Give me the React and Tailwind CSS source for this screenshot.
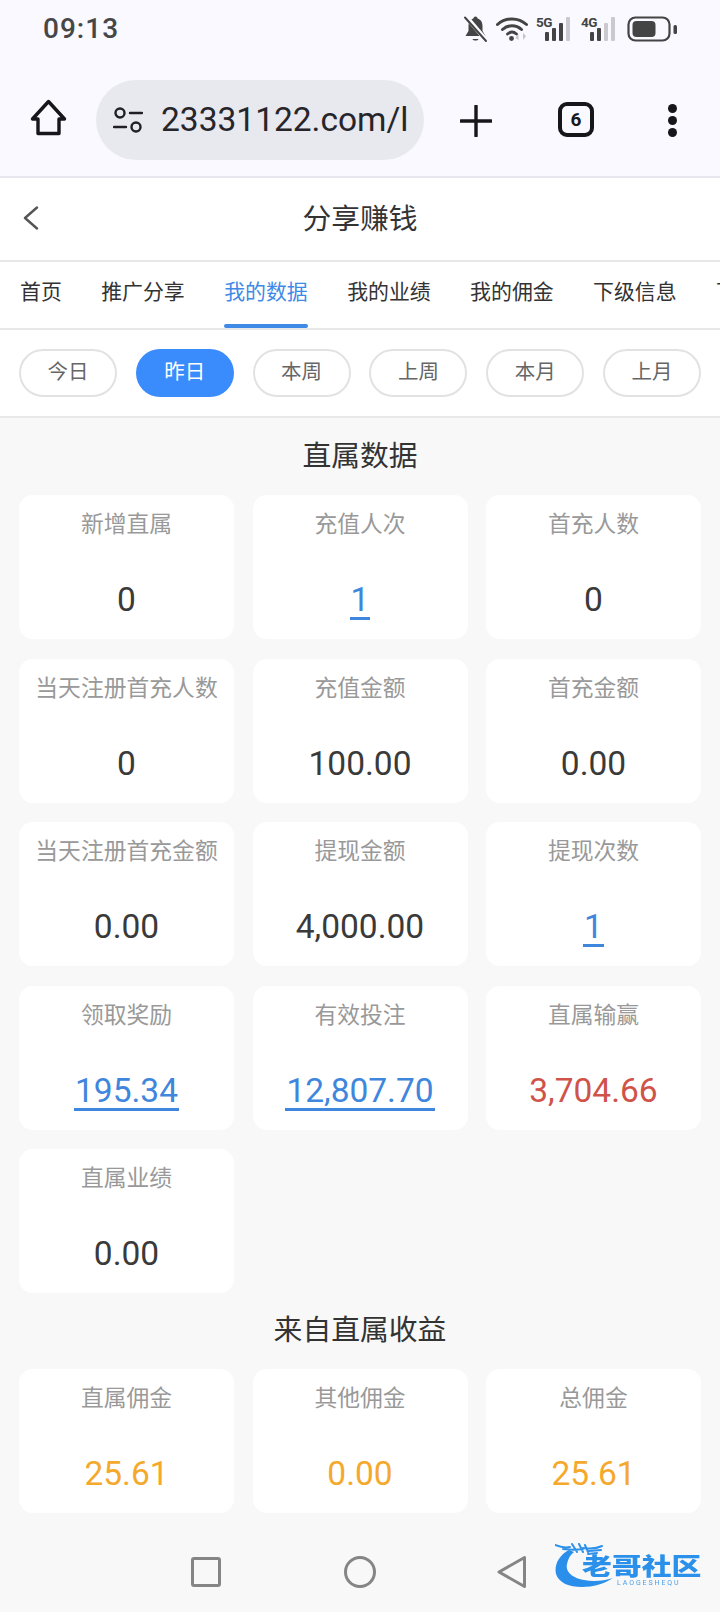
const tabs = ['首页', '推广分享', '我的数据', '我的业绩', '我的佣金', '下级信息', '下级报表']
const ranges = ['今日', '昨日', '本周', '上周', '本月', '上月']

const directStats = [
  { label: '新增直属', value: '0' },
  { label: '充值人次', value: '1', tone: 'link' },
  { label: '首充人数', value: '0' },
  { label: '当天注册首充人数', value: '0' },
  { label: '充值金额', value: '100.00' },
  { label: '首充金额', value: '0.00' },
  { label: '当天注册首充金额', value: '0.00' },
  { label: '提现金额', value: '4,000.00' },
  { label: '提现次数', value: '1', tone: 'link' },
  { label: '领取奖励', value: '195.34', tone: 'link' },
  { label: '有效投注', value: '12,807.70', tone: 'link' },
  { label: '直属输赢', value: '3,704.66', tone: 'red' },
  { label: '直属业绩', value: '0.00' },
]

const incomeStats = [
  { label: '直属佣金', value: '25.61', tone: 'orange' },
  { label: '其他佣金', value: '0.00', tone: 'orange' },
  { label: '总佣金', value: '25.61', tone: 'orange' },
]

function StatCard({ label, value, tone }) {
  let valueClass = 'text-[#3a3a3a] border-transparent'
  if (tone === 'link') valueClass = 'text-[#3f86dd] border-[#3f86dd]'
  if (tone === 'red') valueClass = 'text-[#cf5349] border-transparent'
  if (tone === 'orange') valueClass = 'text-[#f5a92c] border-transparent'
  return (
    <div className="h-[144px] bg-white rounded-[14px] flex flex-col items-center justify-between pt-[15px] pb-[19px]">
      <div className="text-[22.8px] leading-[30px] text-[#999999] whitespace-nowrap">{label}</div>
      <div className={`text-[33.5px] leading-[34px] border-b-[3px] px-[1px] ${valueClass}`}>{value}</div>
    </div>
  )
}

function SignalIcon({ tag, fullBars }) {
  const bars = [
    { x: 9, h: 9 },
    { x: 16, h: 13 },
    { x: 23, h: 18 },
    { x: 30, h: 24 },
  ]
  return (
    <div className="relative w-[37px] h-[26px]">
      <svg width="37" height="26" viewBox="0 0 37 26">
        {bars.map((b, i) => (
          <rect key={b.x} x={b.x} y={25 - b.h} width="4" height={b.h} rx="1" fill={i < fullBars ? '#444' : '#c9c9cf'} />
        ))}
      </svg>
      <span className="absolute left-0 top-0 text-[13.5px] leading-[12px] font-bold tracking-[-0.5px] text-[#444444]">{tag}</span>
    </div>
  )
}

function StatusBar() {
  return (
    <div className="h-[57px] flex items-center justify-between pl-[43px] pr-[41px]">
      <span className="text-[28px] font-medium tracking-[1px] text-[#474747]">09:13</span>
      <div className="flex items-center">
        {/* muted bell */}
        <svg width="25" height="28" viewBox="0 0 25 28" className="mr-[8px]">
          <path d="M12.5 1.5c-1.4 0-2 1-2.100 2C6.800 4.600 5.500 7.500 5.500 11v5l-3 5h20l-3-5v-5c0-3.500-1.300-6.400-4.900-7.500-.1-1-.7-2-2.100-2z" fill="#444" />
          <path d="M9.500 24h6c-.5 2-5.500 2-6 0z" fill="#444" />
          <path d="M3 1.500 23 25" stroke="#f9f9ff" strokeWidth="4.500" />
          <path d="M2 2.500 23 26" stroke="#444" strokeWidth="2" strokeLinecap="round" />
        </svg>
        {/* wifi */}
        <svg width="33" height="25" viewBox="0 0 33 25" className="mr-[7px]">
          <path d="M1.500 8.500C9.500 1 22.500 1 30.500 8.500" fill="none" stroke="#444" strokeWidth="3" strokeLinecap="round" />
          <path d="M6.500 13.500c5.500-5 13.500-5 19 0" fill="none" stroke="#444" strokeWidth="3" strokeLinecap="round" />
          <path d="M11.500 18c2.800-2.400 6.200-2.400 9 0" fill="none" stroke="#444" strokeWidth="2.800" strokeLinecap="round" />
          <circle cx="15.500" cy="22.500" r="2.400" fill="#444" />
          <path d="M22.500 24v-6l-3 4zM27 17v7l3-4z" fill="#c4c4ca" />
        </svg>
        <SignalIcon tag="5G" fullBars={3} />
        <span className="w-[8px]" />
        <SignalIcon tag="4G" fullBars={2} />
        {/* battery */}
        <svg width="52" height="26" viewBox="0 0 52 26" className="ml-[9px]">
          <rect x="1.500" y="1.500" width="41" height="23" rx="7" fill="none" stroke="#444" strokeWidth="2.200" />
          <rect x="5.500" y="5" width="23" height="16" rx="4" fill="#444" />
          <rect x="46.500" y="9" width="3.500" height="9" rx="1.500" fill="#444" />
        </svg>
      </div>
    </div>
  )
}

function BrowserBar() {
  return (
    <div className="h-[119px] flex items-start pt-[23px] pl-[30px] relative">
      {/* home */}
      <svg width="37" height="37" viewBox="0 0 37 37" className="mt-[19px]">
        <path d="M18.500 2.500 2.500 20h5.500v14.500h21V20h5.500z" fill="none" stroke="#17171a" strokeWidth="3.400" strokeLinejoin="round" />
      </svg>
      <div className="ml-[29px] w-[328px] h-[80px] rounded-full bg-[#e8e8ef] flex items-center pl-[17px]">
        {/* site settings */}
        <svg width="30" height="26" viewBox="0 0 30 26">
          <circle cx="7" cy="6" r="4.500" fill="none" stroke="#202024" strokeWidth="2.400" />
          <path d="M17 6h12M1 20h12" stroke="#202024" strokeWidth="2.400" strokeLinecap="round" />
          <circle cx="23" cy="20" r="4.500" fill="none" stroke="#202024" strokeWidth="2.400" />
        </svg>
        <div className="ml-[18px] whitespace-nowrap text-[33.5px] text-[#26262a] leading-[40px]">23331122.com/l</div>
      </div>
      {/* new tab */}
      <svg width="32" height="32" viewBox="0 0 32 32" className="ml-[36px] mt-[25px]">
        <path d="M16 1v30M1 16h30" stroke="#17171a" strokeWidth="3.400" strokeLinecap="round" />
      </svg>
      <div className="ml-[66px] mt-[22px] w-[36px] h-[35px] border-[4px] border-[#17171a] rounded-[9px] flex items-center justify-center text-[19px] font-bold leading-none text-[#17171a]">6</div>
      <div className="ml-[74px] mt-[24px] flex flex-col gap-[3px]">
        <span className="w-[9px] h-[9px] rounded-full bg-[#17171a]" />
        <span className="w-[9px] h-[9px] rounded-full bg-[#17171a]" />
        <span className="w-[9px] h-[9px] rounded-full bg-[#17171a]" />
      </div>
    </div>
  )
}

function LogoMark() {
  return (
    <div className="absolute left-[555px] top-[11px] w-[150px] h-[50px] blur-[0.5px]">
      <svg width="90" height="50" viewBox="0 0 90 50" className="absolute left-0 top-0">
        {/* crescent body */}
        <path d="M14 7C4 12-1 22 1 31c3 9 13 13 26 13 11 0 22-3 31-9-9 3-20 4-29 2C18 35 10 29 12 21c1-5 3-9 7-12z" fill="#2a8fea" />
        {/* dragon head streaks */}
        <path d="M0 2c5 2 10 3 15 2M8 6c8 1 14 1 20 0M17 1l5 8M24 1l4 8M30 2l3 7M28 5c7 1 13 1 19-2M34 8l12-1M33 11l9-1" fill="none" stroke="#2f92ea" strokeWidth="2" strokeLinecap="round" />
      </svg>
      <div className="absolute left-[27px] top-[10px] origin-left scale-x-[1.27] text-[23.5px] leading-[28px] font-black text-[#2b90ea] whitespace-nowrap">老哥社区</div>
      <div className="absolute left-[62px] top-[36px] text-[7px] leading-[8px] tracking-[1.900px] text-[#4a9de6] whitespace-nowrap">LAOGESHEQU</div>
    </div>
  )
}

function NavBar() {
  return (
    <div className="absolute left-0 right-0 bottom-0 h-[80px] bg-[#f8f8f8]">
      <div className="relative h-full">
        <div className="absolute left-[191px] top-[25px] w-[30px] h-[30px] border-[3px] border-[#858585] rounded-[3px]" />
        <div className="absolute left-[344px] top-[24px] w-[32px] h-[32px] border-[3px] border-[#858585] rounded-full" />
        <svg width="30" height="34" viewBox="0 0 30 34" className="absolute left-[497px] top-[23px]">
          <path d="M27.500 2.500v29L2 17z" fill="none" stroke="#858585" strokeWidth="3" strokeLinejoin="round" />
        </svg>
        <LogoMark />
      </div>
    </div>
  )
}

export default function App() {
  return (
    <div
      className="relative w-[720px] h-[1612px] overflow-hidden bg-[#f8f8f8]"
      style={{ fontFamily: 'Roboto, "Noto Sans CJK SC", sans-serif' }}
    >
      <div className="bg-[#f9f9ff] border-b-[2px] border-[#e6e6ec]">
        <StatusBar />
        <BrowserBar />
      </div>

      <div className="h-[84px] bg-white border-b-[2px] border-[#e8e8e8] flex items-center justify-center relative pt-[1px]">
        <svg width="18" height="24" viewBox="0 0 18 24" className="absolute left-[22px] top-[28px]">
          <path d="M15 1.500 3 12l12 10.500" fill="none" stroke="#555555" strokeWidth="2.400" strokeLinecap="round" strokeLinejoin="round" />
        </svg>
        <span className="text-[28.8px] text-[#333333]">分享赚钱</span>
      </div>

      <div className="h-[68px] bg-white border-b-[2px] border-[#e8e8e8] flex overflow-hidden pl-[20px] gap-[39.4px]">
        {tabs.map((tab) => (
          <div
            key={tab}
            className={`relative shrink-0 flex items-center h-full pb-[4px] text-[20.9px] whitespace-nowrap ${tab === '我的数据' ? 'text-[#3f8ae6]' : 'text-[#333333]'}`}
          >
            {tab}
            {tab === '我的数据' && <span className="absolute left-0 right-0 bottom-0 h-[4px] rounded-full bg-[#3f8ae6]" />}
          </div>
        ))}
      </div>

      <div className="h-[88px] bg-white border-b-[2px] border-[#e8e8e8] flex items-center justify-between px-[19px]">
        {ranges.map((r) => (
          <div
            key={r}
            className={`w-[98px] h-[48px] rounded-full flex items-center justify-center pb-[2px] text-[20.5px] ${
              r === '昨日' ? 'bg-[#3a8bfb] text-white' : 'border-2 border-[#e2e2e2] text-[#666666]'
            }`}
          >
            {r}
          </div>
        ))}
      </div>

      <h2 className="h-[77px] flex items-center justify-center pt-[1px] text-[28.8px] font-normal text-[#333333]">直属数据</h2>
      <div className="grid grid-cols-3 gap-x-[18.500px] gap-y-[19.500px] px-[19px]">
        {directStats.map((s) => (
          <StatCard key={s.label} {...s} />
        ))}
      </div>

      <h2 className="h-[76px] flex items-center justify-center text-[28.8px] font-normal text-[#333333]">来自直属收益</h2>
      <div className="grid grid-cols-3 gap-x-[18.500px] gap-y-[19.500px] px-[19px]">
        {incomeStats.map((s) => (
          <StatCard key={s.label} {...s} />
        ))}
        <div className="h-[144px] bg-white rounded-[14px]" />
        <div className="h-[144px] bg-white rounded-[14px]" />
        <div className="h-[144px] bg-white rounded-[14px]" />
      </div>

      <NavBar />
    </div>
  )
}
